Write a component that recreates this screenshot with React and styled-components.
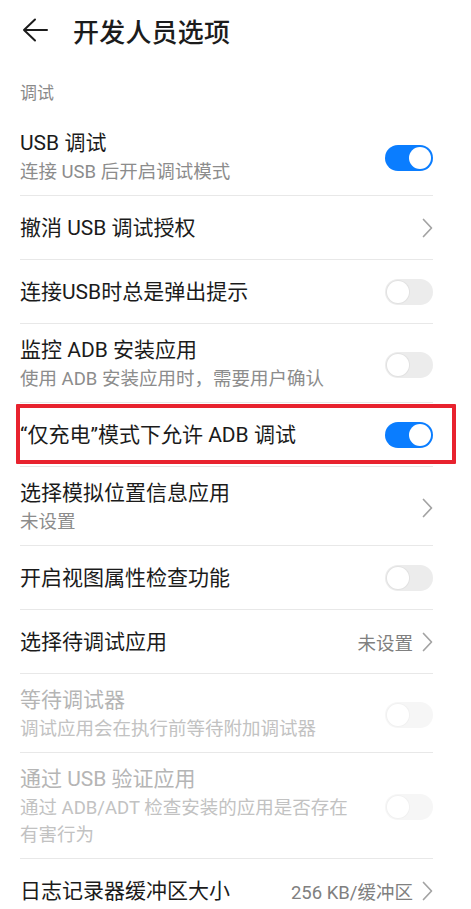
import React from "react";
import styled, { createGlobalStyle } from "styled-components";

const GlobalStyle = createGlobalStyle`
  html, body {
    margin: 0;
    padding: 0;
    background: #ffffff;
  }
  body {
    font-family: Roboto, "Noto Sans CJK SC", sans-serif;
    -webkit-font-smoothing: antialiased;
  }
`;

const Page = styled.div`
  width: 471px;
  min-height: 909px;
  background: #ffffff;
  overflow: hidden;
`;

const Header = styled.header`
  display: flex;
  align-items: center;
  height: 60px;
  padding: 0 20px 0 22px;
  gap: 25px;
`;

const BackButton = styled.button`
  display: flex;
  align-items: center;
  justify-content: center;
  padding: 0;
  border: 0;
  background: none;
  width: 26px;
  height: 26px;
`;

const Title = styled.h1`
  margin: 0;
  font-size: 26px;
  font-weight: 500;
  color: #1c1c1c;
  letter-spacing: 0.2px;
`;

const SectionLabel = styled.div`
  padding: 22px 20px 13px;
  font-size: 17px;
  line-height: 22px;
  color: #8a8a8a;
`;

const List = styled.div`
  display: flex;
  flex-direction: column;
  margin: 0 38px 0 20px;
`;

const Item = styled.div`
  position: relative;
  display: flex;
  align-items: center;
  justify-content: space-between;
  min-height: ${(p) => (p.$sub ? "0" : "64px")};
  padding: ${(p) => (p.$sub ? "12px 0 9px" : "0")};
  box-sizing: border-box;
  border-bottom: ${(p) => (p.$last ? "none" : "1px solid #e8e8e8")};

  ${(p) =>
    p.$highlight &&
    `
    &::after {
      content: "";
      position: absolute;
      left: -4px;
      right: -23px;
      top: 1px;
      bottom: 2px;
      border: 4px solid #e8222e;
      border-radius: 1px;
      pointer-events: none;
    }
  `}
`;

const TextBlock = styled.div`
  display: flex;
  flex-direction: column;
  max-width: 340px;
`;

const ItemTitle = styled.div`
  font-size: 21px;
  line-height: 28px;
  color: ${(p) => (p.$disabled ? "#b5b5b5" : "#1b1b1b")};
`;

const ItemSub = styled.div`
  margin-top: 2px;
  font-size: 18.5px;
  line-height: 27px;
  color: ${(p) => (p.$disabled ? "#c2c2c2" : "#8c8c8c")};
`;

const Trailing = styled.div`
  display: flex;
  align-items: center;
  gap: 9px;
  flex-shrink: 0;
`;

const Value = styled.span`
  font-size: 18.5px;
  color: #808080;
`;

const Switch = styled.span`
  position: relative;
  display: block;
  width: 48px;
  height: 26px;
  border-radius: 13px;
  background: ${(p) => (p.$on ? "#0a7dff" : p.$disabled ? "#f6f6f6" : "#ececec")};

  &::after {
    content: "";
    position: absolute;
    top: 2px;
    left: ${(p) => (p.$on ? "24px" : "2px")};
    width: 22px;
    height: 22px;
    border-radius: 50%;
    background: #ffffff;
    box-shadow: ${(p) =>
      p.$on ? "none" : p.$disabled ? "0 0 0 1px #f1f1f1" : "0 0 0 1px #e2e2e2"};
  }
`;

const ChevronIcon = () => (
  <svg width="11" height="20" viewBox="0 0 11 20" fill="none">
    <polyline
      points="1.5,1.5 9.5,10 1.5,18.5"
      stroke="#a3a3a3"
      strokeWidth="1.7"
      strokeLinecap="round"
      strokeLinejoin="round"
    />
  </svg>
);

const BackIcon = () => (
  <svg width="26" height="24" viewBox="0 0 26 24" fill="none">
    <path
      d="M25 12H2M13 1.5L2 12l11 10.5"
      stroke="#1c1c1c"
      strokeWidth="2"
      strokeLinecap="round"
      strokeLinejoin="round"
    />
  </svg>
);

const items = [
  { title: "USB 调试", sub: "连接 USB 后开启调试模式", type: "switch", on: true },
  { title: "撤消 USB 调试授权", type: "link" },
  { title: "连接USB时总是弹出提示", type: "switch" },
  { title: "监控 ADB 安装应用", sub: "使用 ADB 安装应用时，需要用户确认", type: "switch" },
  { title: "“仅充电”模式下允许 ADB 调试", type: "switch", on: true, highlight: true },
  { title: "选择模拟位置信息应用", sub: "未设置", type: "link" },
  { title: "开启视图属性检查功能", type: "switch" },
  { title: "选择待调试应用", type: "link", value: "未设置" },
  { title: "等待调试器", sub: "调试应用会在执行前等待附加调试器", type: "switch", disabled: true },
  {
    title: "通过 USB 验证应用",
    sub: "通过 ADB/ADT 检查安装的应用是否存在有害行为",
    type: "switch",
    disabled: true,
  },
  { title: "日志记录器缓冲区大小", type: "link", value: "256 KB/缓冲区" },
];

const SettingItem = ({ item, last }) => (
  <Item $sub={!!item.sub} $last={last} $highlight={item.highlight}>
    <TextBlock>
      <ItemTitle $disabled={item.disabled}>{item.title}</ItemTitle>
      {item.sub && <ItemSub $disabled={item.disabled}>{item.sub}</ItemSub>}
    </TextBlock>
    <Trailing>
      {item.type === "switch" && <Switch $on={item.on} $disabled={item.disabled} />}
      {item.value && <Value>{item.value}</Value>}
      {item.type === "link" && <ChevronIcon />}
    </Trailing>
  </Item>
);

export default function App() {
  return (
    <Page>
      <GlobalStyle />
      <Header>
        <BackButton aria-label="返回">
          <BackIcon />
        </BackButton>
        <Title>开发人员选项</Title>
      </Header>
      <SectionLabel>调试</SectionLabel>
      <List>
        {items.map((item, i) => (
          <SettingItem key={item.title} item={item} last={i === items.length - 1} />
        ))}
      </List>
    </Page>
  );
}
